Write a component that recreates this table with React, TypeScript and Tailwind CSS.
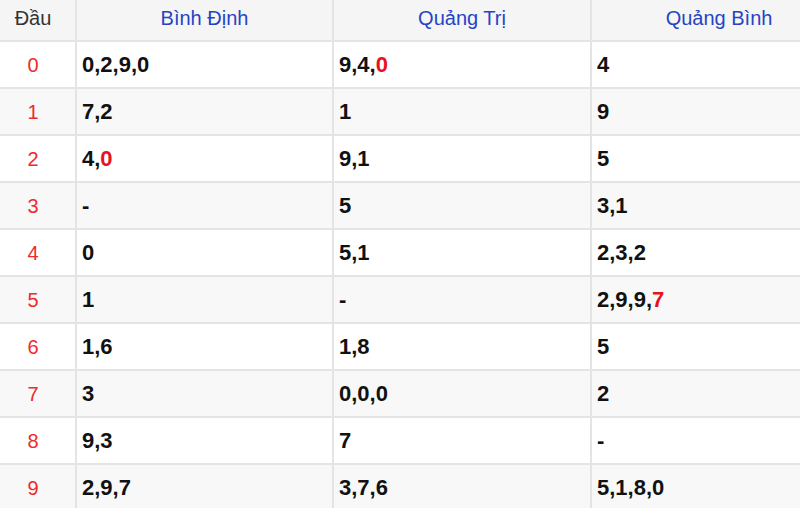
import React from "react";

type Cell = { t: string; red?: boolean }[];

const rows: { d: string; c: Cell[] }[] = [
  { d: "0", c: [[{ t: "0,2,9,0" }], [{ t: "9,4," }, { t: "0", red: true }], [{ t: "4" }]] },
  { d: "1", c: [[{ t: "7,2" }], [{ t: "1" }], [{ t: "9" }]] },
  { d: "2", c: [[{ t: "4," }, { t: "0", red: true }], [{ t: "9,1" }], [{ t: "5" }]] },
  { d: "3", c: [[{ t: "-" }], [{ t: "5" }], [{ t: "3,1" }]] },
  { d: "4", c: [[{ t: "0" }], [{ t: "5,1" }], [{ t: "2,3,2" }]] },
  { d: "5", c: [[{ t: "1" }], [{ t: "-" }], [{ t: "2,9,9," }, { t: "7", red: true }]] },
  { d: "6", c: [[{ t: "1,6" }], [{ t: "1,8" }], [{ t: "5" }]] },
  { d: "7", c: [[{ t: "3" }], [{ t: "0,0,0" }], [{ t: "2" }]] },
  { d: "8", c: [[{ t: "9,3" }], [{ t: "7" }], [{ t: "-" }]] },
  { d: "9", c: [[{ t: "2,9,7" }], [{ t: "3,7,6" }], [{ t: "5,1,8,0" }]] },
];

export default function App() {
  return (
    <div
      className="w-[800px] h-[508px] overflow-hidden bg-white"
      style={{ fontFamily: '"Liberation Sans", Arial, sans-serif' }}
    >
      <table className="border-collapse table-fixed w-[847px]">
        <colgroup>
          <col className="w-[76px]" />
          <col className="w-[257px]" />
          <col className="w-[258px]" />
          <col className="w-[256px]" />
        </colgroup>
        <thead>
          <tr className="bg-[#f5f5f5] h-[41px]">
            <th className="border-r-2 border-b-2 border-[#e4e4e4] text-center font-normal text-[20px] text-[#333333] pr-[9px] pt-0 pb-[4px]">
              Đầu
            </th>
            {["Bình Định", "Quảng Trị", "Quảng Bình"].map((h) => (
              <th
                key={h}
                className="border-r-2 border-b-2 border-[#e4e4e4] text-center font-normal text-[20px] text-[#2544c4] pb-[4px]"
              >
                {h}
              </th>
            ))}
          </tr>
        </thead>
        <tbody>
          {rows.map((r, i) => (
            <tr key={r.d} className={`h-[47px] ${i % 2 === 1 ? "bg-[#f8f8f8]" : "bg-white"}`}>
              <td className="border-r-2 border-b-2 border-[#e4e4e4] text-center pr-[9px] text-[20px] text-[#ee2a2a]">
                {r.d}
              </td>
              {r.c.map((cell, j) => (
                <td
                  key={j}
                  className="border-r-2 border-b-2 border-[#e4e4e4] pl-[5px] text-[22px] font-bold text-[#111111]"
                >
                  {cell.map((p, k) => (
                    <span key={k} className={p.red ? "text-[#e8121e]" : ""}>
                      {p.t}
                    </span>
                  ))}
                </td>
              ))}
            </tr>
          ))}
        </tbody>
      </table>
    </div>
  );
}
